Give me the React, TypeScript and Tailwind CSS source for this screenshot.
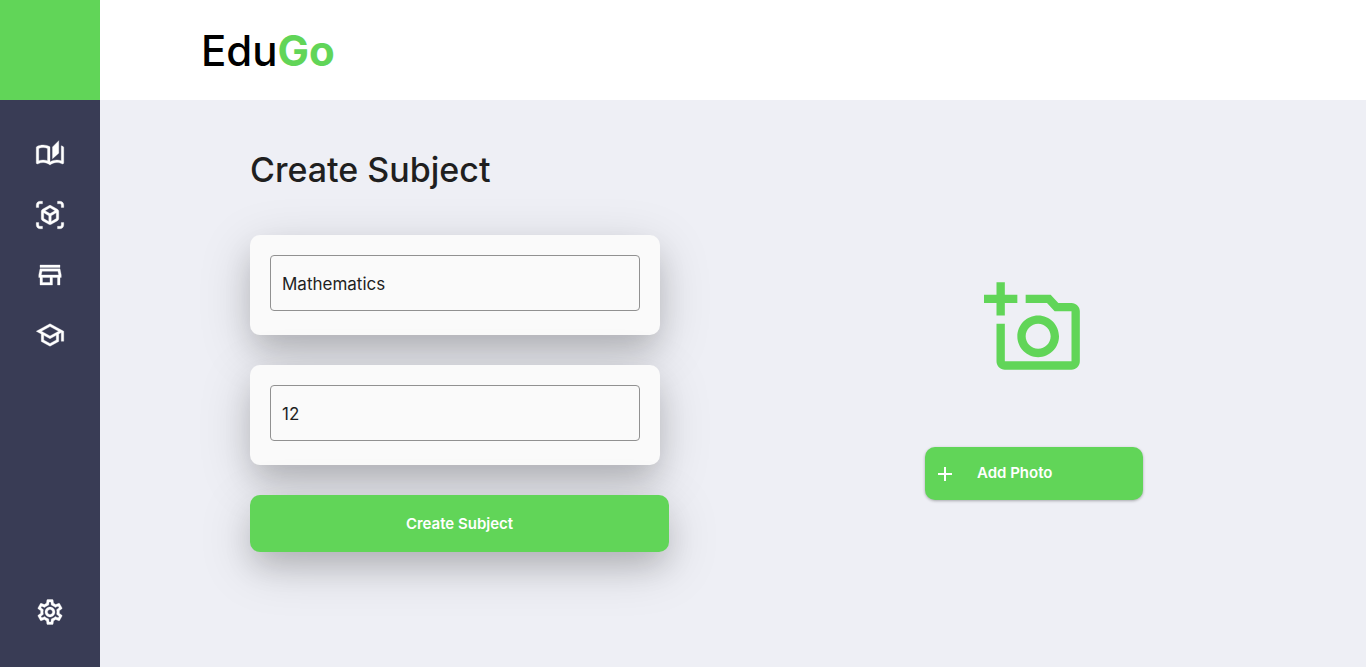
import { useState } from "react";
import type { ReactNode } from "react";
import {
  MdAdd,
  MdOutlineAddAPhoto,
  MdOutlineAutoStories,
  MdOutlineSchool,
  MdOutlineSettings,
  MdOutlineStore,
  MdOutlineViewInAr,
} from "react-icons/md";

const navItems = [
  { label: "Subjects", icon: MdOutlineAutoStories },
  { label: "Virtual entities", icon: MdOutlineViewInAr },
  { label: "Store", icon: MdOutlineStore },
  { label: "Students", icon: MdOutlineSchool },
];

function NavLink({ label, children }: { label: string; children: ReactNode }) {
  return (
    <a
      href="#"
      aria-label={label}
      className="flex size-[30px] items-center justify-center text-white [&_path[fill=none]]:stroke-none"
    >
      {children}
    </a>
  );
}

function Sidebar() {
  return (
    <aside className="flex w-[100px] shrink-0 flex-col bg-[#393c55]">
      <div className="h-[100px] bg-[#61d558]" />
      <nav className="flex flex-1 flex-col items-center gap-[30px] py-10">
        {navItems.map(({ label, icon: Icon }) => (
          <NavLink key={label} label={label}>
            <Icon size={30} strokeWidth={0.25} />
          </NavLink>
        ))}
        <div className="mt-auto">
          <NavLink label="Settings">
            <MdOutlineSettings size={30} strokeWidth={0.25} />
          </NavLink>
        </div>
      </nav>
    </aside>
  );
}

function Field({ label, initial }: { label: string; initial: string }) {
  const [value, setValue] = useState(initial);
  return (
    <div className="w-[410px] rounded-[10px] bg-[#fafafa] px-5 pt-5 pb-6 shadow-[0_14px_52px_rgba(0,0,0,0.17),0_16px_30px_-4px_rgba(0,0,0,0.15)]">
      <input
        aria-label={label}
        value={value}
        onChange={(e) => setValue(e.target.value)}
        className="block h-14 w-full rounded border border-[#919191] bg-transparent px-[11px] pt-0.5 text-[17px] text-[#1f1f1f] outline-none"
      />
    </div>
  );
}

export default function App() {
  return (
    <div className="flex min-h-screen bg-[#eeeff5] font-['Inter','Open_Sans',sans-serif] text-[#1f1f1f]">
      <Sidebar />
      <div className="flex min-w-0 flex-1 flex-col">
        <header className="flex h-[100px] items-center bg-white px-[101px] pt-0.5">
          <a href="#" className="text-[42px] leading-none font-medium text-black">
            Edu<span className="font-bold text-[#61d558]">Go</span>
          </a>
        </header>
        <main className="grid flex-1 grid-cols-[452px_1fr] pl-[150px]">
          <form className="pt-[49px]" onSubmit={(e) => e.preventDefault()}>
            <h1 className="mb-[45px] text-[34px] leading-[41px] font-medium">Create Subject</h1>
            <div className="flex flex-col gap-[30px]">
              <Field label="Subject title" initial="Mathematics" />
              <Field label="Grade" initial="12" />
              <button
                type="submit"
                className="h-[57px] w-[419px] rounded-[10px] bg-[#61d558] pt-0.5 text-[15px] font-semibold text-white shadow-[0_14px_52px_rgba(0,0,0,0.17),0_16px_30px_-4px_rgba(0,0,0,0.15)]"
              >
                Create Subject
              </button>
            </div>
          </form>
          <section className="flex flex-col items-center gap-[69px] pt-[178px]">
            <MdOutlineAddAPhoto size={100} className="text-[#61d558]" />
            <button
              type="button"
              className="flex h-[53px] w-[218px] items-center gap-5 rounded-[10px] bg-[#61d558] px-2 text-[15px] font-semibold text-white shadow-[0_1px_3px_rgba(0,0,0,0.3)]"
            >
              <MdAdd size={24} />
              Add Photo
            </button>
          </section>
        </main>
      </div>
    </div>
  );
}
